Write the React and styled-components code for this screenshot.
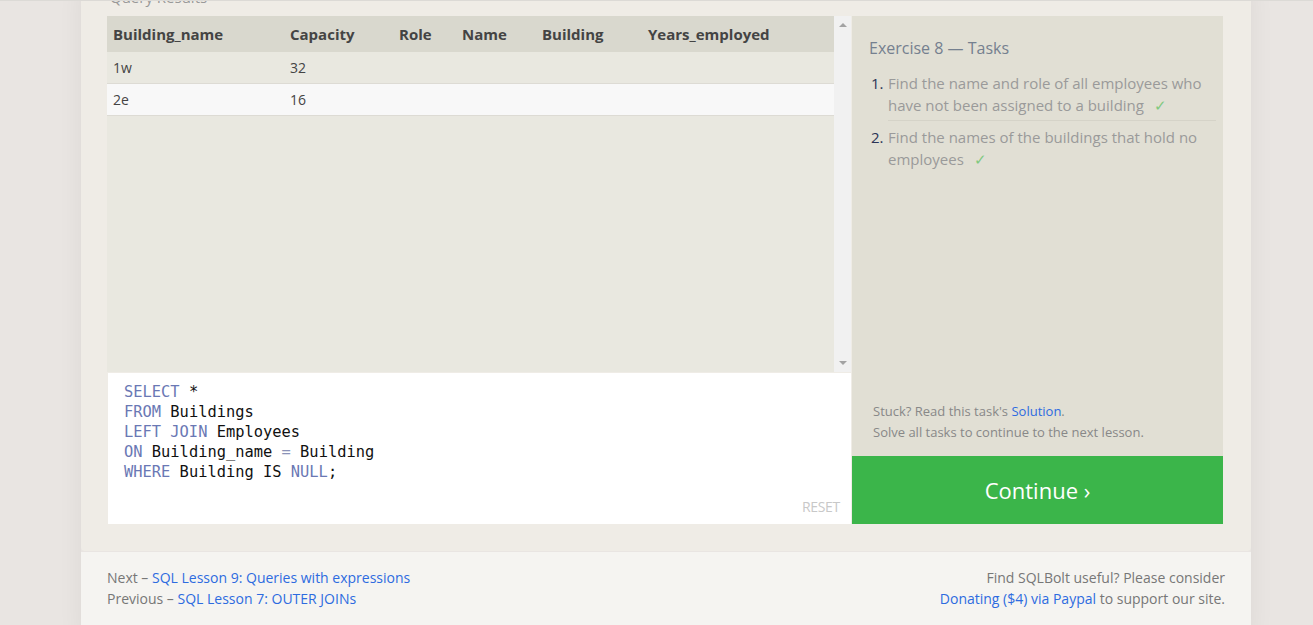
import React from 'react';
import styled, { createGlobalStyle } from 'styled-components';

const GlobalStyle = createGlobalStyle`
  html, body {
    margin: 0;
    padding: 0;
  }
  body {
    background: #e9e5e2;
    font-family: 'Open Sans', 'Noto Sans', sans-serif;
    border-top: 1px solid #dcdad6;
    overflow: hidden;
  }
`;

const Page = styled.div`
  width: 1170px;
  margin-left: 81px;
  box-shadow: 0 0 24px rgba(0, 0, 0, 0.06);
`;

const Lesson = styled.section`
  background: #efece6;
  padding: 0 26px 27px;
  margin-top: -15px;
  border-radius: 0 0 4px 4px;
`;

const SectionLabel = styled.div`
  height: 22px;
  margin-bottom: 8px;
  padding-left: 3px;
  font-size: 15px;
  line-height: 22px;
  color: #999;
`;

const Workspace = styled.div`
  display: grid;
  grid-template-columns: 744px 371px;
  gap: 1px;
`;

const LeftColumn = styled.div`
  display: flex;
  flex-direction: column;
`;

const ResultsFrame = styled.div`
  display: flex;
  height: 356px;
  background: #e9e8e0;
`;

const ResultsScroll = styled.div`
  flex: 1;
  overflow: hidden;
`;

const Table = styled.table`
  width: 100%;
  border-collapse: collapse;
  table-layout: fixed;
  color: #444;
`;

const HeadCell = styled.th`
  box-sizing: border-box;
  width: ${({ w }) => (w ? `${w}px` : 'auto')};
  height: 36px;
  padding: 0 6px;
  background: #d9d8ce;
  font-size: 15px;
  font-weight: 700;
  text-align: left;
  white-space: nowrap;
`;

const Row = styled.tr`
  background: ${({ alt }) => (alt ? '#f8f8f8' : '#e9e8e0')};
  border-bottom: 1px solid #dddbd4;
`;

const Cell = styled.td`
  height: 31px;
  padding: 0 6px;
  font-size: 14px;
`;

const ScrollTrack = styled.div`
  width: 17px;
  background: #f1f1f1;
  display: flex;
  flex-direction: column;
  justify-content: space-between;
  align-items: center;
  padding: 7px 0;
  box-sizing: border-box;
`;

const Arrow = styled.span`
  width: 0;
  height: 0;
  border-left: 4px solid transparent;
  border-right: 4px solid transparent;
  ${({ down }) => (down ? 'border-top: 4px solid #a3a3a3;' : 'border-bottom: 4px solid #a3a3a3;')}
`;

const Editor = styled.div`
  height: 151px;
  box-sizing: border-box;
  margin-top: 1px;
  margin-left: 1px;
  background: #fff;
  padding: 9px 11px 8px 16px;
  display: flex;
  flex-direction: column;
`;

const Code = styled.pre`
  margin: 0;
  font-family: 'DejaVu Sans Mono', 'Liberation Mono', monospace;
  font-size: 15.4px;
  line-height: 20px;
  color: #111;
`;

const Kw = styled.span`
  color: #6a78b4;
`;

const Op = styled.span`
  color: #8a93b8;
`;

const Reset = styled.div`
  margin-top: auto;
  align-self: flex-end;
  font-size: 14px;
  color: #c8c8c8;
  letter-spacing: -0.3px;
`;

const TaskPanel = styled.aside`
  display: flex;
  flex-direction: column;
  background: #e1dfd4;
`;

const TaskBody = styled.div`
  flex: 1;
  display: flex;
  flex-direction: column;
  padding: 21px 7px 13px 17px;
`;

const TaskTitle = styled.h2`
  margin: 0;
  font-size: 16px;
  font-weight: 400;
  line-height: 22px;
  color: #75808f;
`;

const TaskList = styled.ol`
  list-style: none;
  margin: 13px 0 0;
  padding: 0;
`;

const TaskItem = styled.li`
  display: flex;
  align-items: flex-start;
  padding-top: ${({ first }) => (first ? '0' : '5px')};
  font-size: 15px;
  line-height: 22px;
`;

const TaskNum = styled.span`
  width: 19px;
  padding-left: 2px;
  box-sizing: border-box;
  flex-shrink: 0;
  color: #2b3456;
`;

const TaskText = styled.span`
  flex: 1;
  color: #9a9a9a;
  padding-bottom: ${({ first }) => (first ? '4px' : '0')};
  border-bottom: ${({ first }) => (first ? '1px solid #d5d3c8' : 'none')};
`;

const Check = styled.span`
  margin-left: 10px;
  color: #7fc97f;
`;

const Hint = styled.p`
  margin: auto 0 0;
  padding-left: 4px;
  font-size: 13px;
  line-height: 21px;
  color: #888;
`;

const Link = styled.a`
  color: #2d6be0;
  text-decoration: none;
`;

const ContinueButton = styled.button`
  height: 68px;
  border: none;
  background: #3bb54a;
  color: #fff;
  font-family: inherit;
  font-size: 22px;
  cursor: pointer;
`;

const Footer = styled.footer`
  margin-top: 1px;
  background: #f5f4f1;
  padding: 15px 26px 30px;
  display: flex;
  justify-content: space-between;
  font-size: 14px;
  line-height: 21px;
  color: #777;
`;

const FooterBlock = styled.div`
  text-align: ${({ right }) => (right ? 'right' : 'left')};
`;

const columns = [
  { name: 'Building_name', w: 177 },
  { name: 'Capacity', w: 109 },
  { name: 'Role', w: 63 },
  { name: 'Name', w: 80 },
  { name: 'Building', w: 106 },
  { name: 'Years_employed' },
];

const rows = [
  ['1w', '32', '', '', '', ''],
  ['2e', '16', '', '', '', ''],
];

const App = () => {
  return (
    <>
      <GlobalStyle />
      <Page>
        <Lesson>
          <SectionLabel>Query Results</SectionLabel>
          <Workspace>
            <LeftColumn>
              <ResultsFrame>
                <ResultsScroll>
                  <Table>
                    <thead>
                      <tr>
                        {columns.map((c) => (
                          <HeadCell key={c.name} w={c.w}>
                            {c.name}
                          </HeadCell>
                        ))}
                      </tr>
                    </thead>
                    <tbody>
                      {rows.map((r, i) => (
                        <Row key={i} alt={i % 2 === 1}>
                          {r.map((v, j) => (
                            <Cell key={j}>{v}</Cell>
                          ))}
                        </Row>
                      ))}
                    </tbody>
                  </Table>
                </ResultsScroll>
                <ScrollTrack>
                  <Arrow />
                  <Arrow down />
                </ScrollTrack>
              </ResultsFrame>

              <Editor>
                <Code>
                  <Kw>SELECT</Kw> *{'\n'}
                  <Kw>FROM</Kw> Buildings{'\n'}
                  <Kw>LEFT JOIN</Kw> Employees{'\n'}
                  <Kw>ON</Kw> Building_name <Op>=</Op> Building{'\n'}
                  <Kw>WHERE</Kw> Building IS <Kw>NULL</Kw>;
                </Code>
                <Reset>RESET</Reset>
              </Editor>
            </LeftColumn>

            <TaskPanel>
              <TaskBody>
                <TaskTitle>Exercise 8 — Tasks</TaskTitle>
                <TaskList>
                  <TaskItem first>
                    <TaskNum>1.</TaskNum>
                    <TaskText first>
                      Find the name and role of all employees who have not been assigned to a building
                      <Check>✓</Check>
                    </TaskText>
                  </TaskItem>
                  <TaskItem>
                    <TaskNum>2.</TaskNum>
                    <TaskText>
                      Find the names of the buildings that hold no employees
                      <Check>✓</Check>
                    </TaskText>
                  </TaskItem>
                </TaskList>
                <Hint>
                  Stuck? Read this task's <Link href="#">Solution</Link>.
                  <br />
                  Solve all tasks to continue to the next lesson.
                </Hint>
              </TaskBody>
              <ContinueButton>Continue ›</ContinueButton>
            </TaskPanel>
          </Workspace>
        </Lesson>

        <Footer>
          <FooterBlock>
            Next – <Link href="#">SQL Lesson 9: Queries with expressions</Link>
            <br />
            Previous – <Link href="#">SQL Lesson 7: OUTER JOINs</Link>
          </FooterBlock>
          <FooterBlock right>
            Find SQLBolt useful? Please consider
            <br />
            <Link href="#">Donating ($4) via Paypal</Link> to support our site.
          </FooterBlock>
        </Footer>
      </Page>
    </>
  );
};

export default App;
